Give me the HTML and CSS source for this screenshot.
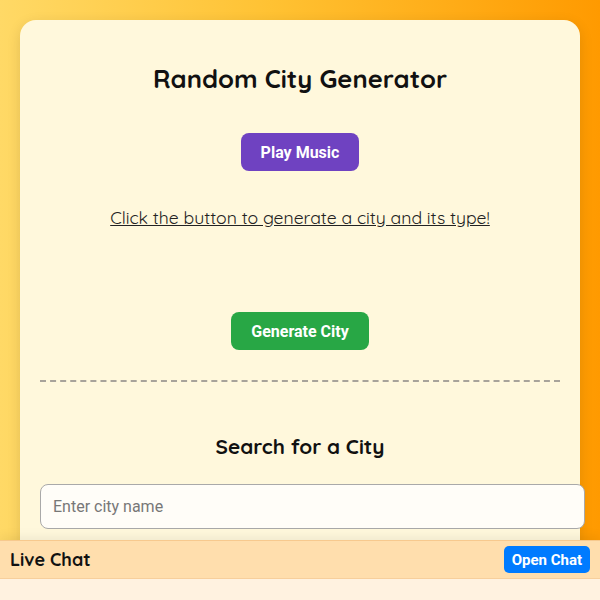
FILE: index.html
```html
<!DOCTYPE html>
<html lang="en">

<head>
    <meta charset="UTF-8">
    <meta name="viewport" content="width=device-width, initial-scale=1.0">
    <title>Random City Generator</title>
    <link rel="stylesheet" href="styles.css">
</head>

<body>
    <div class="container">
        <h1>Random City Generator</h1>
        <button class="button music">Play Music</button>
        <p class="prompt">Click the button to generate a city and its type!</p>
        <div class="result"></div>
        <button class="button generate">Generate City</button>

        <hr class="divider">

        <h2>Search for a City</h2>
        <input type="text" class="search" placeholder="Enter city name">
    </div>

    <div class="chat">
        <div class="chat-header">
            <span class="chat-title">Live Chat</span>
            <button class="chat-button">Open Chat</button>
        </div>
        <div class="chat-body"></div>
    </div>
</body>

</html>
```

FILE: styles.css
```css
body,
html {
    margin: 0;
    padding: 0;
    height: 100%;
}

body {
    font-family: Quicksand, Lato, "Open Sans", sans-serif;
    background: linear-gradient(90deg, #ffd966 0%, #ffc233 45%, #ff9a00 100%);
    padding: 20px 20px 0;
    box-sizing: border-box;
    overflow: hidden;
}

.container {
    background-color: #fff8dc;
    border-radius: 16px;
    padding: 20px;
    min-height: 700px;
    display: flex;
    flex-direction: column;
    align-items: center;
    box-shadow: 0 4px 14px rgba(0, 0, 0, 0.12);
}

h1 {
    font-size: 25.6px;
    line-height: 32px;
    font-weight: 700;
    color: #111;
    margin: 22px 0 39px;
}

h2 {
    font-size: 20.8px;
    line-height: 26px;
    font-weight: 700;
    color: #111;
    margin: 51px 0 25px;
}

.button {
    font-family: Roboto, sans-serif;
    font-weight: 700;
    font-size: 16px;
    color: white;
    border: none;
    border-radius: 8px;
    padding: 0 20px;
    height: 38px;
    cursor: pointer;
}

.music {
    background-color: #6f42c1;
}

.generate {
    background-color: #28a745;
}

.prompt {
    font-size: 17.6px;
    line-height: 22px;
    color: #222;
    text-decoration: underline;
    margin: 35px 0 0;
}

.result {
    height: 84px;
}

.divider {
    width: 100%;
    border: none;
    border-top: 2px dashed #a8a39a;
    margin: 30px 0 0;
}

.search {
    align-self: stretch;
    font-family: Roboto, sans-serif;
    font-size: 16px;
    padding: 12px;
    border: 1px solid #a9a9a9;
    border-radius: 8px;
    background-color: #fffdf8;
    margin-right: -25px;
}

.search::placeholder {
    color: #777;
}

.chat {
    position: fixed;
    left: 0;
    right: 0;
    bottom: 0;
    box-shadow: 0 -4px 10px rgba(0, 0, 0, 0.06);
}

.chat-header {
    display: flex;
    justify-content: space-between;
    align-items: center;
    background-color: #ffdead;
    border-top: 1px solid #f7c98e;
    border-bottom: 1px solid #f7cf9c;
    padding: 0 10px;
    height: 37px;
}

.chat-title {
    font-size: 18px;
    font-weight: 700;
    color: #111;
}

.chat-button {
    font-family: Roboto, sans-serif;
    font-weight: 700;
    font-size: 15px;
    color: white;
    background-color: #007bff;
    border: none;
    border-radius: 5px;
    height: 27px;
    padding: 0 8px;
    cursor: pointer;
}

.chat-body {
    height: 21px;
    background-color: #fff2e0;
}
```
